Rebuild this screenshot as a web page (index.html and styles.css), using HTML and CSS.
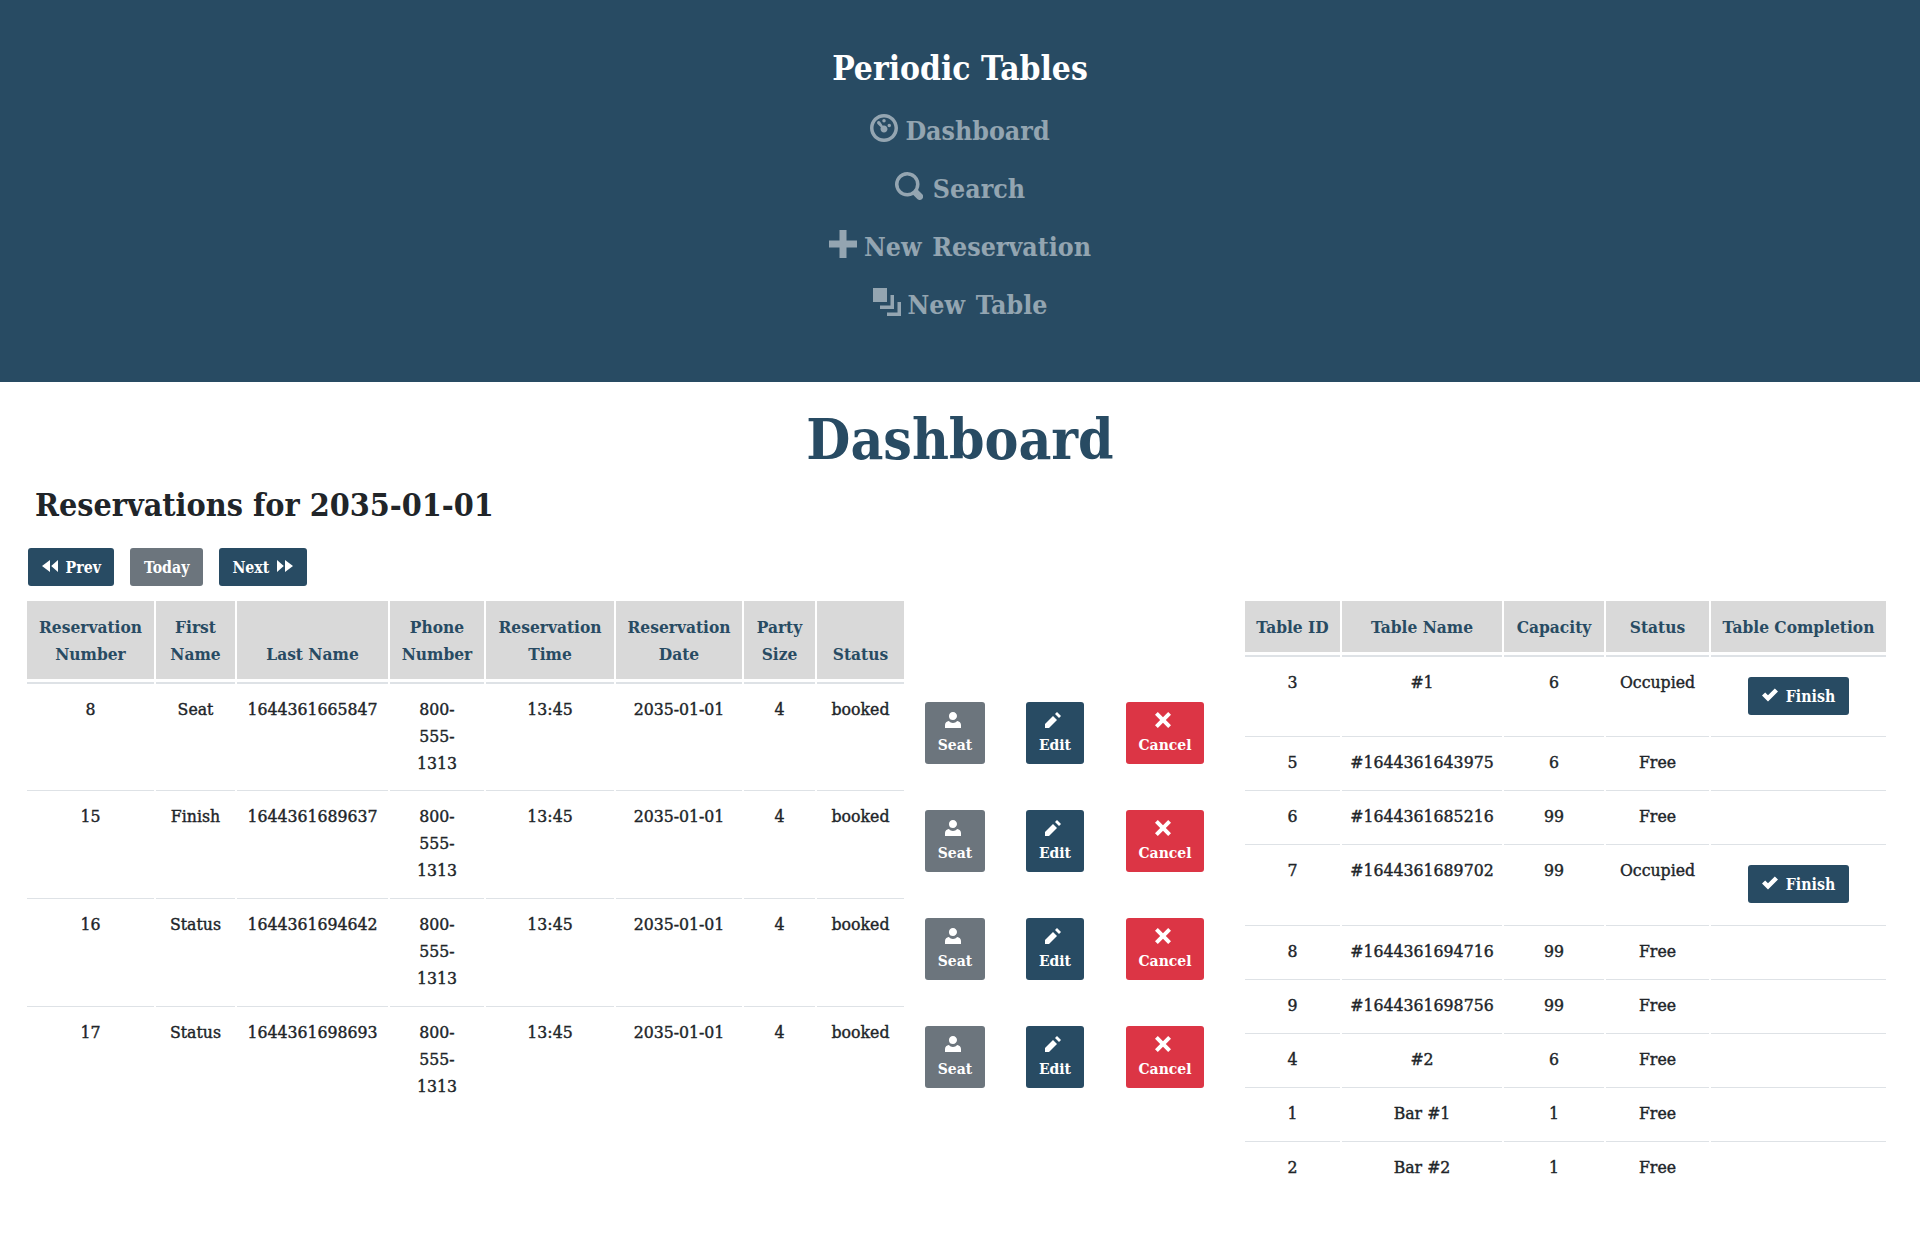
FILE: index.html
```html
<!DOCTYPE html>
<html lang="en">
<head>
<meta charset="utf-8">
<title>Periodic Tables</title>
<link rel="stylesheet" href="styles.css">
</head>
<body>
<svg class="defs" width="0" height="0" aria-hidden="true">
  <symbol id="i-dash" viewBox="0 0 8 8"><path fill-rule="evenodd" d="M4 0C1.800 0 0 1.800 0 4s1.800 4 4 4 4-1.800 4-4-1.800-4-4-4zm0 1c1.660 0 3 1.340 3 3S5.660 7 4 7 1 5.660 1 4s1.340-3 3-3zm0 .4a.5.5 0 1 0 0 1 .5.5 0 0 0 0-1zM2.500 2a.5.5 0 0 0-.35.85l.95.95c-.06.13-.1.27-.1.45 0 .55.45 1 1 1s1-.45 1-1-.45-1-1-1c-.12 0-.24.03-.35.08l-.8-1.180A.5.5 0 0 0 2.500 2zm3 .8a.5.5 0 1 0 0 1 .5.5 0 0 0 0-1z"/></symbol>
  <symbol id="i-search" viewBox="0 0 8 8"><path fill-rule="evenodd" d="M3.500 0a3.500 3.500 0 1 0 1.700 6.560l.04.04 1 1a1 1 0 1 0 1.400-1.400l-1-1-.05-.04A3.500 3.500 0 0 0 3.500 0zm0 1a2.500 2.500 0 1 1 0 5 2.500 2.500 0 0 1 0-5z"/></symbol>
  <symbol id="i-plus" viewBox="0 0 8 8"><path d="M3 0v3H0v2h3v3h2V5h3V3H5V0z"/></symbol>
  <symbol id="i-layers" viewBox="0 0 8 8"><path d="M0 0v4h4V0zm5 2v3H2v1h4V2zm2 2v3H4v1h4V4z"/></symbol>
  <symbol id="i-prev" viewBox="0 0 8 8"><path d="M4 1 0 4l4 3zm4 0L4.600 4 8 7z"/></symbol>
  <symbol id="i-next" viewBox="0 0 8 8"><path d="M0 1v6l3.400-3zm4 0v6l4-3z"/></symbol>
  <symbol id="i-person" viewBox="0 0 8 8"><path d="M4 0a2 2 0 0 0-2 2.200C2 3.300 2.900 4 4 4s2-.9 2-2-.9-2-2-2zM1.900 4.500C.85 4.600 0 5.500 0 6.500V8h8V6.500c0-1-.83-1.900-1.900-2C5.560 5.100 4.800 5.500 4 5.500s-1.560-.4-2.100-1z"/></symbol>
  <symbol id="i-pencil" viewBox="0 0 8 8"><path d="m6 0-1 1 2 2 1-1zM4 2 0 6v2h2l4-4z"/></symbol>
  <symbol id="i-x" viewBox="0 0 8 8"><path d="M1.410 0 0 1.410 2.590 4 0 6.590 1.410 8 4 5.410 6.590 8 8 6.590 5.410 4 8 1.410 6.590 0 4 2.590z"/></symbol>
  <symbol id="i-check" viewBox="0 0 8 8"><path d="M6.410 0 3 3.410 1.590 2 0 3.590 3 6.590 8 1.590z" transform="translate(0 .7)"/></symbol>
</svg>

<header class="topbar">
  <div class="brand">Periodic Tables</div>
  <nav class="nav">
    <a class="nav-link"><svg class="nav-icon"><use href="#i-dash"/></svg> Dashboard</a>
    <a class="nav-link"><svg class="nav-icon"><use href="#i-search"/></svg> <span class="pad">Search</span></a>
    <a class="nav-link"><svg class="nav-icon"><use href="#i-plus"/></svg> New Reservation</a>
    <a class="nav-link"><svg class="nav-icon"><use href="#i-layers"/></svg> New Table</a>
  </nav>
</header>

<main>
  <h1 class="page-title">Dashboard</h1>
  <h2 class="sub-title">Reservations for 2035-01-01</h2>
  <div class="date-nav">
    <button class="btn btn-blue"><svg class="btn-icon"><use href="#i-prev"/></svg> Prev</button>
    <button class="btn btn-gray">Today</button>
    <button class="btn btn-blue">Next <svg class="btn-icon"><use href="#i-next"/></svg></button>
  </div>
  <div class="tables">
    <table class="data res">
      <colgroup>
        <col class="r1"><col class="r2"><col class="r3"><col class="r4"><col class="r5"><col class="r6"><col class="r7"><col class="r8"><col class="r9"><col class="r10"><col class="r11">
      </colgroup>
      <thead>
        <tr>
          <th>Reservation Number</th><th>First Name</th><th>Last Name</th><th>Phone Number</th><th>Reservation Time</th><th>Reservation Date</th><th>Party Size</th><th>Status</th>
          <th class="blank"></th><th class="blank"></th><th class="blank"></th>
        </tr>
      </thead>
      <tbody>
        <tr>
          <td>8</td><td>Seat</td><td>1644361665847</td><td class="phone">800-555-1313</td><td>13:45</td><td>2035-01-01</td><td>4</td><td>booked</td>
          <td class="act"><button class="abtn btn-gray"><svg class="a-icon"><use href="#i-person"/></svg>Seat</button></td>
          <td class="act"><button class="abtn btn-blue"><svg class="a-icon"><use href="#i-pencil"/></svg>Edit</button></td>
          <td class="act"><button class="abtn btn-red"><svg class="a-icon"><use href="#i-x"/></svg>Cancel</button></td>
        </tr>
        <tr>
          <td>15</td><td>Finish</td><td>1644361689637</td><td class="phone">800-555-1313</td><td>13:45</td><td>2035-01-01</td><td>4</td><td>booked</td>
          <td class="act"><button class="abtn btn-gray"><svg class="a-icon"><use href="#i-person"/></svg>Seat</button></td>
          <td class="act"><button class="abtn btn-blue"><svg class="a-icon"><use href="#i-pencil"/></svg>Edit</button></td>
          <td class="act"><button class="abtn btn-red"><svg class="a-icon"><use href="#i-x"/></svg>Cancel</button></td>
        </tr>
        <tr>
          <td>16</td><td>Status</td><td>1644361694642</td><td class="phone">800-555-1313</td><td>13:45</td><td>2035-01-01</td><td>4</td><td>booked</td>
          <td class="act"><button class="abtn btn-gray"><svg class="a-icon"><use href="#i-person"/></svg>Seat</button></td>
          <td class="act"><button class="abtn btn-blue"><svg class="a-icon"><use href="#i-pencil"/></svg>Edit</button></td>
          <td class="act"><button class="abtn btn-red"><svg class="a-icon"><use href="#i-x"/></svg>Cancel</button></td>
        </tr>
        <tr>
          <td>17</td><td>Status</td><td>1644361698693</td><td class="phone">800-555-1313</td><td>13:45</td><td>2035-01-01</td><td>4</td><td>booked</td>
          <td class="act"><button class="abtn btn-gray"><svg class="a-icon"><use href="#i-person"/></svg>Seat</button></td>
          <td class="act"><button class="abtn btn-blue"><svg class="a-icon"><use href="#i-pencil"/></svg>Edit</button></td>
          <td class="act"><button class="abtn btn-red"><svg class="a-icon"><use href="#i-x"/></svg>Cancel</button></td>
        </tr>
      </tbody>
    </table>
    <table class="data tbl">
      <colgroup>
        <col class="t1"><col class="t2"><col class="t3"><col class="t4"><col class="t5">
      </colgroup>
      <thead>
        <tr><th>Table ID</th><th>Table Name</th><th>Capacity</th><th>Status</th><th>Table Completion</th></tr>
      </thead>
      <tbody>
        <tr><td>3</td><td>#1</td><td>6</td><td>Occupied</td><td><button class="btn btn-blue btn-finish"><svg class="btn-icon"><use href="#i-check"/></svg> Finish</button></td></tr>
        <tr><td>5</td><td>#1644361643975</td><td>6</td><td>Free</td><td></td></tr>
        <tr><td>6</td><td>#1644361685216</td><td>99</td><td>Free</td><td></td></tr>
        <tr><td>7</td><td>#1644361689702</td><td>99</td><td>Occupied</td><td><button class="btn btn-blue btn-finish"><svg class="btn-icon"><use href="#i-check"/></svg> Finish</button></td></tr>
        <tr><td>8</td><td>#1644361694716</td><td>99</td><td>Free</td><td></td></tr>
        <tr><td>9</td><td>#1644361698756</td><td>99</td><td>Free</td><td></td></tr>
        <tr><td>4</td><td>#2</td><td>6</td><td>Free</td><td></td></tr>
        <tr><td>1</td><td>Bar #1</td><td>1</td><td>Free</td><td></td></tr>
        <tr><td>2</td><td>Bar #2</td><td>1</td><td>Free</td><td></td></tr>
      </tbody>
    </table>
  </div>
</main>
</body>
</html>
```
FILE: styles.css
```css
* { box-sizing: border-box; }
html, body { margin: 0; padding: 0; }
body {
  font-family: "Roboto Slab", "DejaVu Serif Condensed", "DejaVu Serif", serif;
  font-size: 17.500px;
  line-height: 27px;
  color: #212529;
  background: #fff;
  min-height: 1236px;
}
.defs { position: absolute; }
svg { fill: currentColor; }

.topbar {
  background: #284b63;
  height: 382px;
  padding-top: 42px;
  display: flex;
  flex-direction: column;
  align-items: center;
}
.brand {
  color: #fff;
  font-size: 33.300px;
  font-weight: 700;
  line-height: 54px;
  height: 60px;
}
.nav { display: flex; flex-direction: column; align-items: center; }
.nav-link {
  color: rgba(255, 255, 255, .5);
  font-size: 26.500px;
  font-weight: 700;
  word-spacing: 2.500px;
  line-height: 58px;
  height: 58px;
  display: flex;
  align-items: center;
  gap: 7px;
}
.nav-icon { width: 28px; height: 28px; margin-top: -6px; }
.pad { margin-left: 3px; }

.page-title {
  margin: 0;
  padding-top: 19px;
  text-align: center;
  color: #284b63;
  font-size: 56.500px;
  font-weight: 700;
  line-height: 76px;
}
.sub-title {
  margin: 6px 0 0;
  padding-left: 35px;
  font-size: 32px;
  font-weight: 700;
  line-height: 44px;
}
.date-nav {
  margin-top: 21px;
  padding-left: 28px;
  display: flex;
  gap: 16px;
}
.btn {
  border: 0;
  border-radius: 3px;
  color: #fff;
  font: inherit;
  font-weight: 700;
  font-size: 15.750px;
  height: 38px;
  padding: 0 13.500px;
  display: inline-flex;
  align-items: center;
  gap: 8px;
}
.btn-icon { width: 16px; height: 16px; margin-top: -3px; }
.btn-blue { background: #284b63; }
.btn-gray { background: #6c757d; }
.btn-red { background: #dc3545; }

.tables {
  margin-top: 15px;
  padding-left: 25px;
  display: flex;
  align-items: flex-start;
  gap: 17px;
}
.data {
  border-collapse: separate;
  border-spacing: 2px 0;
  table-layout: fixed;
  text-align: center;
}
.res { width: 1201px; }
.tbl { width: 645px; }
.r1 { width: 127px; } .r2 { width: 79px; } .r3 { width: 151px; } .r4 { width: 94px; }
.r5 { width: 128px; } .r6 { width: 126px; } .r7 { width: 71px; } .r8 { width: 87px; }
.r9 { width: 98px; } .r10 { width: 98px; } .r11 { width: 118px; }
.t1 { width: 95px; } .t2 { width: 160px; } .t3 { width: 100px; } .t4 { width: 103px; } .t5 { width: 175px; }

.data th {
  background: #d9d9d9;
  background-clip: padding-box;
  color: #284b63;
  font-weight: 700;
  font-size: 17.200px;
  padding: 13px 6px 11px;
  vertical-align: bottom;
  line-height: 27px;
  border-bottom: 3px solid transparent;
}
.data th.blank { background: transparent; }
.data td {
  padding: 12px 8px 14px;
  vertical-align: top;
  border-top: 1px solid #dee2e6;
  -webkit-text-stroke: .4px currentColor;
}
.data tbody tr:first-child td {
  border-top-width: 2px;
  padding-bottom: 13px;
}
.data td.phone { padding-left: 20px; padding-right: 20px; }
.data td.act {
  padding-top: 19px;
  padding-bottom: 0;
  border-top-color: transparent;
}
.data tbody tr:first-child td.act { padding-top: 18px; padding-bottom: 0; }
.abtn {
  border: 0;
  border-radius: 3px;
  color: #fff;
  font: inherit;
  font-weight: 700;
  font-size: 15.500px;
  line-height: 20px;
  height: 62px;
  padding: 10px 13px 0;
  display: inline-flex;
  flex-direction: column;
  align-items: center;
  gap: 7px;
  white-space: nowrap;
  -webkit-text-stroke: 0;
}
.a-icon { width: 16px; height: 16px; flex: none; margin-right: 4px; }
.btn-finish { margin: 8px 0; -webkit-text-stroke: 0; }
```
